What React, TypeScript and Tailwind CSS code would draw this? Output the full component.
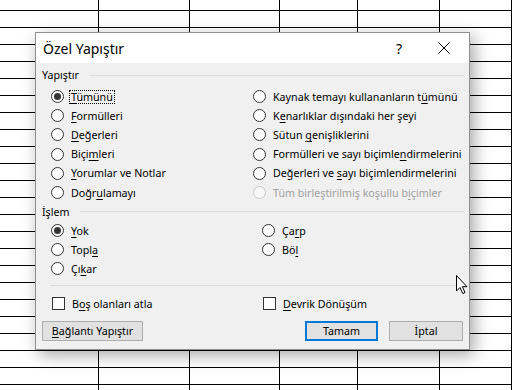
import React from "react";

const colW = [99, 91, 90, 78, 82, 72];

function Grid() {
  const rows = Array.from({ length: 23 });
  return (
    <div className="w-[514px] h-[390px] bg-white overflow-hidden">
      <div className="flex h-[10px]">
        {colW.map((w, i) => (
          <div key={i} className="h-full border-r border-black" style={{ width: w }} />
        ))}
      </div>
      {rows.map((_, r) => (
        <div key={r} className="flex h-[17px]">
          {colW.map((w, i) => (
            <div key={i} className="h-full border-r border-t border-black" style={{ width: w }} />
          ))}
        </div>
      ))}
    </div>
  );
}

function Radio({ checked, disabled }: { checked?: boolean; disabled?: boolean }) {
  return (
    <span
      className={
        "w-[13px] h-[13px] rounded-full border flex items-center justify-center shrink-0 " +
        (disabled ? "border-[#c8c8c8] bg-[#f7f7f7]" : "border-[#333333] bg-white")
      }
    >
      {checked && <span className="w-[7px] h-[7px] rounded-full bg-[#333333]" />}
    </span>
  );
}

function Check() {
  return <span className="w-[13px] h-[13px] border border-[#333333] bg-white shrink-0" />;
}

function L({ a, k, b }: { a?: string; k: string; b?: string }) {
  return (
    <span className="whitespace-nowrap">
      {a}
      <span className="underline underline-offset-2 decoration-1">{k}</span>
      {b}
    </span>
  );
}

function Opt({
  children,
  checked,
  disabled,
  focus,
}: {
  children: React.ReactNode;
  checked?: boolean;
  disabled?: boolean;
  focus?: boolean;
}) {
  return (
    <div className={"flex items-center gap-[7px] h-[19.2px] " + (disabled ? "text-[#a0a0a0]" : "text-black")}>
      <Radio checked={checked} disabled={disabled} />
      <span className={focus ? "outline-1 outline-dotted outline-black px-[1px] -ml-[1px] leading-[12px]" : ""}>
        {children}
      </span>
    </div>
  );
}

function Opt2({ children, checked }: { children: React.ReactNode; checked?: boolean }) {
  return (
    <div className="flex items-center gap-[7px] h-[19px] text-black">
      <Radio checked={checked} />
      <span>{children}</span>
    </div>
  );
}

function Header({ label }: { label: string }) {
  return (
    <div className="flex items-center h-full pl-[6px] pr-[5px] gap-[10px]">
      <span className="text-black">{label}</span>
      <span className="flex-1 h-px bg-[#dcdcdc]" />
    </div>
  );
}

export default function App() {
  return (
    <div className="relative w-[514px] h-[390px] font-['Segoe_UI','Noto_Sans',sans-serif] text-[10.7px]">
      <Grid />
      <div className="absolute left-[35px] top-[32px] w-[435px] h-[318px] border border-[#8f8f8f] bg-[#f0f0f0] flex flex-col shadow-[4px_5px_16px_rgba(0,0,0,0.35)]">
        <div className="h-[30px] bg-white flex items-center pl-[7px] shrink-0">
          <span className="text-[14px] text-black flex-1">Özel Yapıştır</span>
          <span className="text-[14px] text-black w-[20px] text-center mr-[29px]">?</span>
          <svg width="12" height="12" viewBox="0 0 12 12" className="mr-[19px]">
            <path d="M0.5 0.5 L11.5 11.5 M11.5 0.5 L0.5 11.5" stroke="#000" strokeWidth="1" fill="none" />
          </svg>
        </div>
        <div className="h-[24px] shrink-0">
          <Header label="Yapıştır" />
        </div>
        <div className="grid grid-cols-[202px_1fr] pl-[15px] shrink-0">
          <div className="flex flex-col">
            <Opt checked focus>
              <L k="T" b="ümünü" />
            </Opt>
            <Opt>
              <L k="F" b="ormülleri" />
            </Opt>
            <Opt>
              <L k="D" b="eğerleri" />
            </Opt>
            <Opt>
              <L a="Biçi" k="m" b="leri" />
            </Opt>
            <Opt>
              <L k="Y" b="orumlar ve Notlar" />
            </Opt>
            <Opt>
              <L a="Doğr" k="u" b="lamayı" />
            </Opt>
          </div>
          <div className="flex flex-col">
            <Opt>
              <L a="Kaynak temayı kullananların t" k="ü" b="münü" />
            </Opt>
            <Opt>
              <L a="K" k="e" b="narlıklar dışındaki her şeyi" />
            </Opt>
            <Opt>
              <L a="Sütun " k="g" b="enişliklerini" />
            </Opt>
            <Opt>
              <L a="Formülleri ve sayı biçimle" k="n" b="dirmelerini" />
            </Opt>
            <Opt>
              <L a="Değerleri ve " k="s" b="ayı biçimlendirmelerini" />
            </Opt>
            <Opt disabled>
              <L a="Tüm birleştirilmiş koşullu b" k="i" b="çimler" />
            </Opt>
          </div>
        </div>
        <div className="h-[19px] shrink-0">
          <Header label="İşlem" />
        </div>
        <div className="grid grid-cols-[211px_1fr] pl-[15px] shrink-0">
          <div className="flex flex-col">
            <Opt2 checked>
              <L k="Y" b="ok" />
            </Opt2>
            <Opt2>
              <L a="Topl" k="a" />
            </Opt2>
            <Opt2>
              <L a="Çı" k="k" b="ar" />
            </Opt2>
          </div>
          <div className="flex flex-col">
            <Opt2>
              <L a="Ça" k="r" b="p" />
            </Opt2>
            <Opt2>
              <L a="Bö" k="l" />
            </Opt2>
          </div>
        </div>
        <div className="mt-[7px] ml-[14px] mr-[5px] h-px bg-[#dcdcdc] shrink-0" />
        <div className="grid grid-cols-[211px_1fr] pl-[16px] mt-[8px] h-[19px] shrink-0">
          <div className="flex items-center gap-[7px]">
            <Check />
            <L a="B" k="o" b="ş olanları atla" />
          </div>
          <div className="flex items-center gap-[7px]">
            <Check />
            <L k="D" b="evrik Dönüşüm" />
          </div>
        </div>
        <div className="flex items-center mt-[8px] h-[20px] pl-[6px] shrink-0">
          <button className="w-[101px] h-[20px] bg-[#e1e1e1] border border-[#adadad] text-black text-[10.7px] flex items-center justify-center">
            <L k="B" b="ağlantı Yapıştır" />
          </button>
          <div className="flex-1" />
          <button className="w-[73px] h-[20px] bg-[#e1e1e1] border-2 border-[#0078d7] text-black text-[10.7px] flex items-center justify-center">
            Tamam
          </button>
          <button className="ml-[11px] mr-[6px] w-[74px] h-[20px] bg-[#e1e1e1] border border-[#adadad] text-black text-[10.7px] flex items-center justify-center">
            İptal
          </button>
        </div>
      </div>
      <svg className="absolute left-[455px] top-[274px]" width="14" height="21" viewBox="0 0 14 21">
        <path
          d="M1.5 1.5 L1.5 17 L5 13.5 L7.7 19.5 L10 18.5 L7.4 12.7 L12 12.7 Z"
          fill="#fff"
          stroke="#000"
          strokeWidth="1"
          strokeLinejoin="miter"
        />
      </svg>
    </div>
  );
}
